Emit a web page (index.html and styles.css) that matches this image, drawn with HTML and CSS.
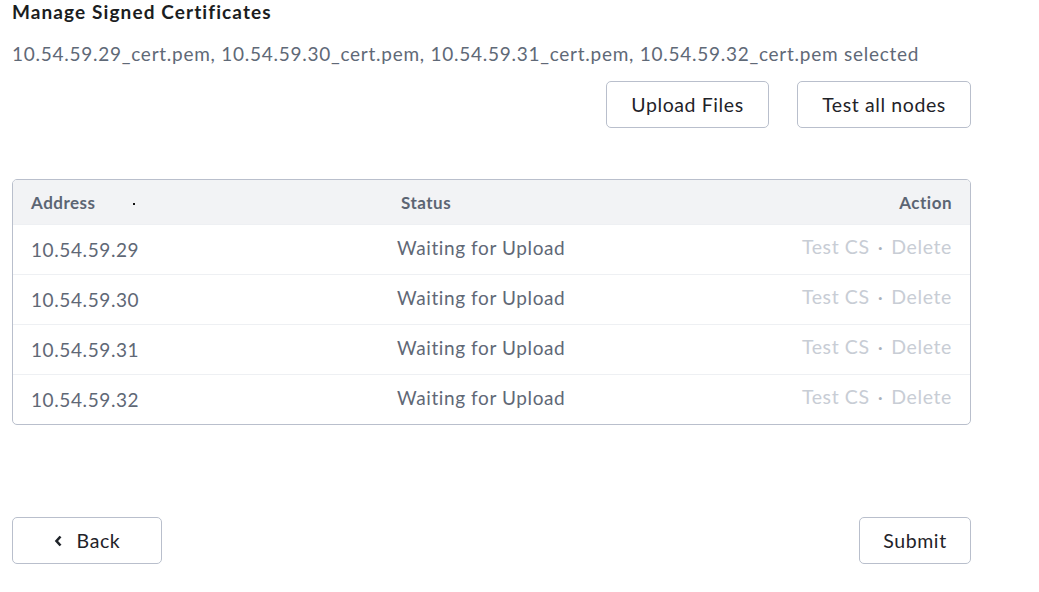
FILE: index.html
```html
<!DOCTYPE html>
<html lang="en">
<head>
    <meta charset="UTF-8">
    <title>Manage Signed Certificates</title>
    <link rel="stylesheet" href="styles.css">
</head>
<body>
    <div class="page">
        <h1 class="title">Manage Signed Certificates</h1>
        <p class="selected">10.54.59.29_cert.pem, 10.54.59.30_cert.pem, 10.54.59.31_cert.pem, 10.54.59.32_cert.pem selected</p>

        <div class="toolbar">
            <button class="btn btn-upload">Upload Files</button>
            <button class="btn btn-test">Test all nodes</button>
        </div>

        <div class="table">
            <div class="row head">
                <div class="col-address">Address <span class="sort-dot"></span></div>
                <div class="col-status">Status</div>
                <div class="col-action">Action</div>
            </div>
            <div class="row">
                <div class="col-address">10.54.59.29</div>
                <div class="col-status">Waiting for Upload</div>
                <div class="col-action"><span>Test CS</span><span class="sep">·</span><span>Delete</span></div>
            </div>
            <div class="row">
                <div class="col-address">10.54.59.30</div>
                <div class="col-status">Waiting for Upload</div>
                <div class="col-action"><span>Test CS</span><span class="sep">·</span><span>Delete</span></div>
            </div>
            <div class="row">
                <div class="col-address">10.54.59.31</div>
                <div class="col-status">Waiting for Upload</div>
                <div class="col-action"><span>Test CS</span><span class="sep">·</span><span>Delete</span></div>
            </div>
            <div class="row">
                <div class="col-address">10.54.59.32</div>
                <div class="col-status">Waiting for Upload</div>
                <div class="col-action"><span>Test CS</span><span class="sep">·</span><span>Delete</span></div>
            </div>
        </div>

        <div class="footer">
            <button class="btn btn-back">
                <svg width="9" height="12" viewBox="0 0 9 12"><path d="M6.5 1.5 L2.5 6 L6.5 10.5" fill="none" stroke="#1f2329" stroke-width="2.6"/></svg>
                Back
            </button>
            <button class="btn btn-submit">Submit</button>
        </div>
    </div>
</body>
</html>
```

FILE: styles.css
```css
body {
    margin: 0;
    background: #fff;
    font-family: 'Lato', 'Noto Sans', sans-serif;
    color: #222;
}

.page {
    width: 959px;
    padding: 0 0 0 12px;
}

.title {
    margin: 0;
    padding-top: 1px;
    font-size: 19px;
    font-weight: 700;
    letter-spacing: 1.1px;
    color: #1b1d21;
    line-height: 22px;
}

.selected {
    margin: 19px 0 0;
    font-size: 19px;
    letter-spacing: 0.74px;
    line-height: 24px;
    color: #5f6977;
}

.toolbar {
    display: flex;
    justify-content: flex-end;
    gap: 28px;
    margin-top: 15px;
}

.btn {
    height: 47px;
    padding: 0;
    background: #fff;
    border: 1px solid #b9bfcc;
    border-radius: 5px;
    font-family: inherit;
    font-size: 19.5px;
    letter-spacing: 0.6px;
    color: #1f2329;
    cursor: pointer;
}

.btn-upload { width: 163px; }
.btn-test { width: 174px; }

/* table */
.table {
    margin-top: 51px;
    border: 1px solid #b9bfcc;
    border-radius: 5px;
    overflow: hidden;
}

.row {
    display: flex;
    align-items: center;
    height: 49px;
    padding: 0 18px;
    border-top: 1px solid #eef0f3;
    font-size: 19px;
    letter-spacing: 0.6px;
    color: #5f6876;
}

.row.head {
    height: 44px;
    border-top: none;
    background: #f2f3f5;
    font-size: 17px;
    letter-spacing: 0.5px;
    font-weight: 700;
    color: #5c6573;
}

.col-address {
    width: 366px;
}

.col-status {
    flex: 1;
}

.row.head .col-status {
    padding-left: 4px;
}

.row:not(.head) .col-status {
    margin-top: -4px;
}

.row:not(.head) .col-action {
    margin-top: -6px;
    font-size: 19.5px;
}

.col-action {
    text-align: right;
    color: #c8cdd5;
}

.col-action .sep {
    margin: 0 8px;
    color: #a9b0bb;
}

.row.head .col-action {
    color: #5c6573;
}

.sort-dot {
    display: inline-block;
    width: 2px;
    height: 2px;
    margin-left: 33px;
    background: #111;
    vertical-align: middle;
}

.footer {
    display: flex;
    justify-content: space-between;
    margin-top: 92px;
}

.btn-back {
    display: flex;
    align-items: center;
    justify-content: center;
    gap: 14px;
    width: 150px;
}

.btn-submit {
    width: 112px;
}
```
